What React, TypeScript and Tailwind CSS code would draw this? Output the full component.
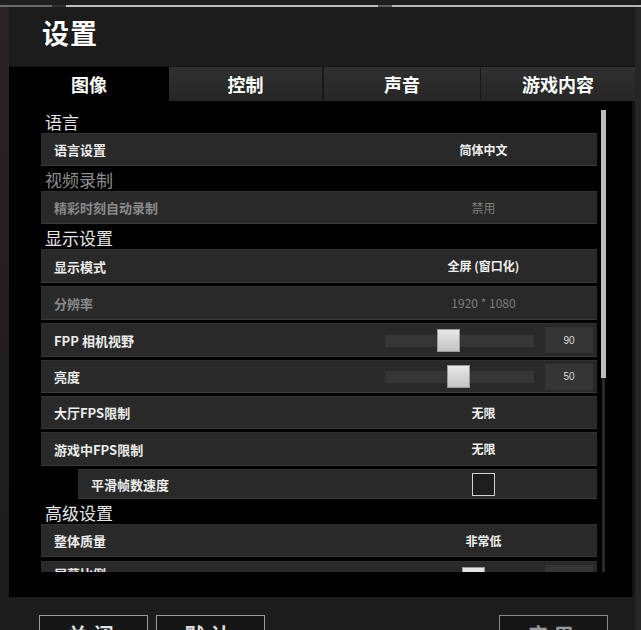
import React from "react";

const tabs = ["图像", "控制", "声音", "游戏内容"];

function Header({ text, dim }: { text: string; dim?: boolean }) {
  return (
    <div
      className={`h-[21px] shrink-0 pl-[4px] pb-[3px] flex items-center text-[17px] leading-none ${
        dim ? "text-[#8c8c8c]" : "text-[#e6e6e6]"
      }`}
    >
      {text}
    </div>
  );
}

function Row({
  label,
  h = "h-[34px]",
  mb = "mb-[3px]",
  dim,
  indent,
  lift,
  children,
}: {
  label: string;
  h?: string;
  mb?: string;
  dim?: boolean;
  indent?: boolean;
  lift?: boolean;
  children?: React.ReactNode;
}) {
  return (
    <div
      className={`${h} ${mb} ${indent ? "ml-[37px]" : ""} shrink-0 flex items-center bg-[#292929] border-b border-[#3a3a3a] border-t border-t-[#303030]`}
    >
      <span
        className={`flex-1 pl-[13px] text-[13px] font-bold leading-none ${lift ? "relative -top-[5px]" : ""} ${
          dim ? "text-[#8a8a8a]" : "text-[#ececec]"
        }`}
      >
        {label}
      </span>
      <div className="w-[227px] h-full flex items-center justify-center">{children}</div>
    </div>
  );
}

function Value({ text, dim }: { text: string; dim?: boolean }) {
  return (
    <span
      className={`text-[12px] leading-none ${dim ? "text-[#7e7e7e] font-normal" : "text-[#f0f0f0] font-bold"}`}
    >
      {text}
    </span>
  );
}

function Slider({ pos, value }: { pos: number; value: string }) {
  return (
    <div className="w-full h-full flex items-center">
      <div className="ml-[15px] w-[149px] h-[13px] bg-[#363636] border-t border-[#2c2c2c] relative">
        <div
          className="absolute top-[-6px] w-[23px] h-[23px] bg-gradient-to-b from-[#e8e8e8] to-[#c4c4c4] border border-[#9a9a9a]"
          style={{ left: pos }}
        />
      </div>
      <div className="ml-[11px] w-[48px] h-[26px] bg-[#353535] flex items-center justify-center text-[10px] text-[#dcdcdc] font-['Liberation_Sans',sans-serif]">
        {value}
      </div>
    </div>
  );
}

export default function App() {
  return (
    <div className="w-[641px] h-[630px] overflow-hidden bg-[#1c1c1c] flex flex-col font-['Noto_Sans_CJK_SC','Noto_Sans',sans-serif]">
      {/* top edge line */}
      <div className="h-[5px] shrink-0 bg-[#1e1e1e]" />
      <div className="h-[2px] shrink-0 flex">
        <div className="w-[52px] bg-[#6a6a6a]" />
        <div className="w-[14px] bg-[#333]" />
        <div className="w-[312px] bg-[#bdbdbd]" />
        <div className="w-[14px] bg-[#5c5c5c]" />
        <div className="flex-1 bg-[#b5b5b5]" />
      </div>
      <div className="flex flex-1 min-h-0">
        <div className="w-[9px] bg-gradient-to-b from-[#2a2521] via-[#221f1c] to-[#1e1c1b]" />
        <div className="w-[626px] flex flex-col">
          {/* title */}
          <div className="h-[59px] shrink-0 pl-[33px] pt-[12px]">
            <h1 className="text-[27px] leading-none font-bold text-white tracking-[1px]">设置</h1>
          </div>
          {/* tabs */}
          <div className="h-[35px] shrink-0 flex border-t border-[#141414]">
            {tabs.map((t, i) => (
              <div
                key={t}
                className={`flex items-center justify-center text-[18px] font-bold text-white leading-none ${
                  i === 0
                    ? "w-[160px] bg-black"
                    : i === 1
                    ? "w-[155px] bg-gradient-to-b from-[#303030] to-[#262626] border-r-2 border-[#181818]"
                    : i === 2
                    ? "w-[157px] bg-gradient-to-b from-[#303030] to-[#262626] border-r border-[#181818]"
                    : "flex-1 bg-gradient-to-b from-[#303030] to-[#262626]"
                }`}
              >
                {t}
              </div>
            ))}
          </div>
          {/* content panel */}
          <div className="h-[496px] shrink-0 bg-black border-r-[3px] border-[#141414] flex pl-[32px]">
            <div className="w-[556px] h-[471px] overflow-hidden flex flex-col pt-[11px]">
              <Header text="语言" />
              <Row label="语言设置" h="h-[33px]" mb="mb-[4px]">
                <Value text="简体中文" />
              </Row>
              <Header text="视频录制" dim />
              <Row label="精彩时刻自动录制" h="h-[33px]" mb="mb-[4px]" dim>
                <Value text="禁用" dim />
              </Row>
              <Header text="显示设置" />
              <Row label="显示模式">
                <Value text="全屏 (窗口化)" />
              </Row>
              <Row label="分辨率" dim>
                <Value text="1920 * 1080" dim />
              </Row>
              <Row label="FPP 相机视野">
                <Slider pos={52} value="90" />
              </Row>
              <Row label="亮度" h="h-[33px]">
                <Slider pos={62} value="50" />
              </Row>
              <Row label="大厅FPS限制" h="h-[33px]">
                <Value text="无限" />
              </Row>
              <Row label="游戏中FPS限制">
                <Value text="无限" />
              </Row>
              <Row label="平滑帧数速度" h="h-[30px]" mb="mb-[4px]" indent>
                <div className="w-[23px] h-[23px] border-[1.5px] border-[#d4d4d4] bg-[#1e1e1e]" />
              </Row>
              <Header text="高级设置" />
              <Row label="整体质量" h="h-[33px]" mb="mb-[4px]">
                <Value text="非常低" />
              </Row>
              <Row label="屏幕比例" lift>
                <Slider pos={77} value="100" />
              </Row>
            </div>
            {/* scrollbar */}
            <div className="ml-[4px] w-[5px] h-[471px] pt-[9px] flex flex-col items-center">
              <div className="w-[5px] h-[268px] shrink-0 bg-[#bdbdbd]" />
              <div className="w-[3px] flex-1 bg-[#2a2a2a]" />
            </div>
          </div>
          {/* footer buttons */}
          <div className="flex-1 flex pl-[30px] pr-[27px] pt-[18px] gap-[8px]">
            {["关闭", "默认"].map((b) => (
              <div
                key={b}
                className="w-[109px] h-[40px] shrink-0 border border-[#9a9a9a] bg-[#161616] flex items-center justify-center text-[20px] font-bold text-[#e0e0e0] tracking-[6px]"
              >
                {b}
              </div>
            ))}
            <div className="flex-1" />
            <div className="w-[109px] h-[40px] shrink-0 border border-[#8a8a8a] bg-[#161616] flex items-center justify-center text-[20px] font-bold text-[#9a9a9a] tracking-[6px]">
              应用
            </div>
          </div>
        </div>
        <div className="flex-1 bg-[#262626]" />
      </div>
    </div>
  );
}
